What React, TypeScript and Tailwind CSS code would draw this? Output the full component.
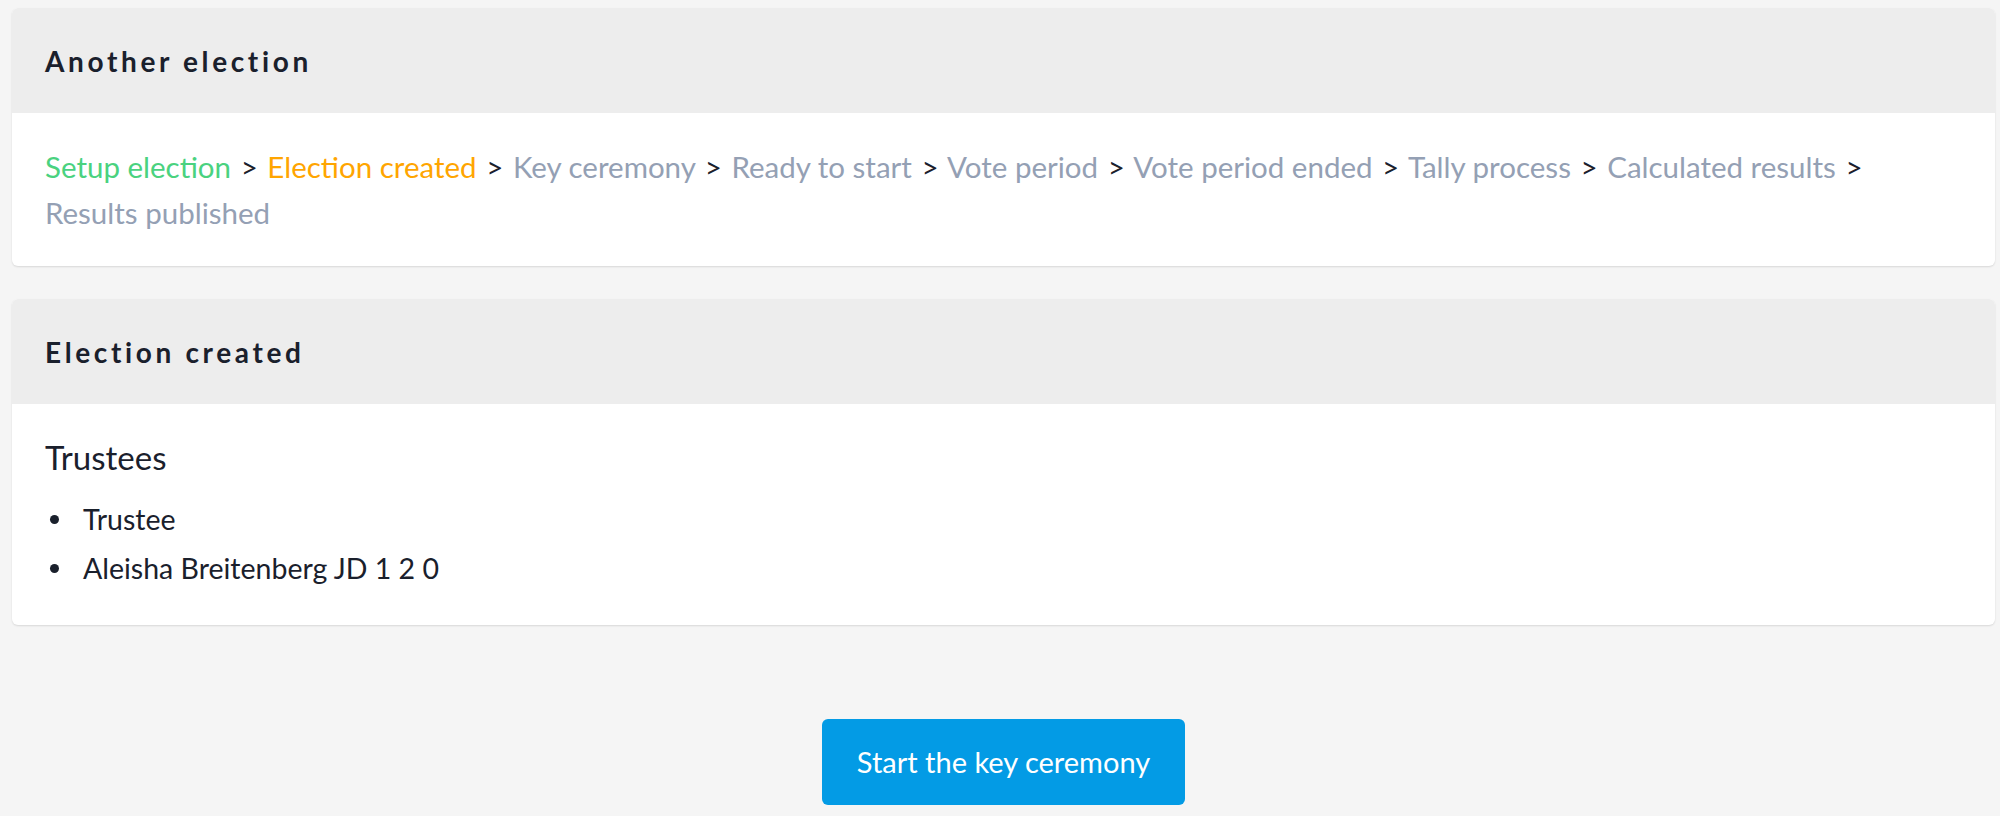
import React from "react";

const steps: { label: string; color: string }[] = [
  { label: "Setup election", color: "text-[#4ad27f]" },
  { label: "Election created", color: "text-[#ffa500]" },
  { label: "Key ceremony", color: "text-[#94a0b4]" },
  { label: "Ready to start", color: "text-[#94a0b4]" },
  { label: "Vote period", color: "text-[#94a0b4]" },
  { label: "Vote period ended", color: "text-[#94a0b4]" },
  { label: "Tally process", color: "text-[#94a0b4]" },
  { label: "Calculated results", color: "text-[#94a0b4]" },
  { label: "Results published", color: "text-[#94a0b4]" },
];

function Card({ title, children, bodyClass }: { title: string; children: React.ReactNode; bodyClass: string }) {
  return (
    <div className="rounded-[6px] bg-white overflow-hidden shadow-[0_1px_2px_rgba(0,0,0,0.12)]">
      <div className="bg-[#ededed] h-[105px] flex items-center px-[33px]">
        <h2 className="text-[28px] font-bold tracking-[0.13em] text-[#1a202c]">{title}</h2>
      </div>
      <div className={bodyClass}>{children}</div>
    </div>
  );
}

export default function App() {
  return (
    <div
      className="min-h-screen bg-[#f5f5f5] pl-[12px] pr-[5px] pt-[8px] text-[#1a202c]"
      style={{ fontFamily: "Lato, 'Noto Sans', sans-serif" }}
    >
      <Card title="Another election" bodyClass="px-[33px] pt-[31px] pb-[30px] text-[29.5px] leading-[46px]">
        <p>
          {steps.map((s, i) => (
            <React.Fragment key={s.label}>
              <span className={s.color}>{s.label}</span>
              {i < steps.length - 1 && (
                <>
                  {" "}
                  <span className="text-[#1a202c] mx-[2px]">&gt;</span>{" "}
                </>
              )}
            </React.Fragment>
          ))}
        </p>
      </Card>

      <div className="mt-[33px]">
        <Card title="Election created" bodyClass="px-[33px] pt-[32px] pb-[32px]">
          <h3 className="text-[33px] leading-[42px]">Trustees</h3>
          <ul className="mt-[17px] text-[28.5px] leading-[49px]">
            <li className="flex items-center">
              <span className="ml-[5px] mr-[24px] w-[9px] h-[9px] rounded-full bg-[#1a202c]" />
              Trustee
            </li>
            <li className="flex items-center">
              <span className="ml-[5px] mr-[24px] w-[9px] h-[9px] rounded-full bg-[#1a202c]" />
              Aleisha Breitenberg JD 1 2 0
            </li>
          </ul>
        </Card>
      </div>

      <div className="flex justify-center mt-[94px]">
        <button className="bg-[#039be5] text-white rounded-[6px] px-[35px] h-[86px] text-[29px] leading-[46px]">
          Start the key ceremony
        </button>
      </div>
    </div>
  );
}
